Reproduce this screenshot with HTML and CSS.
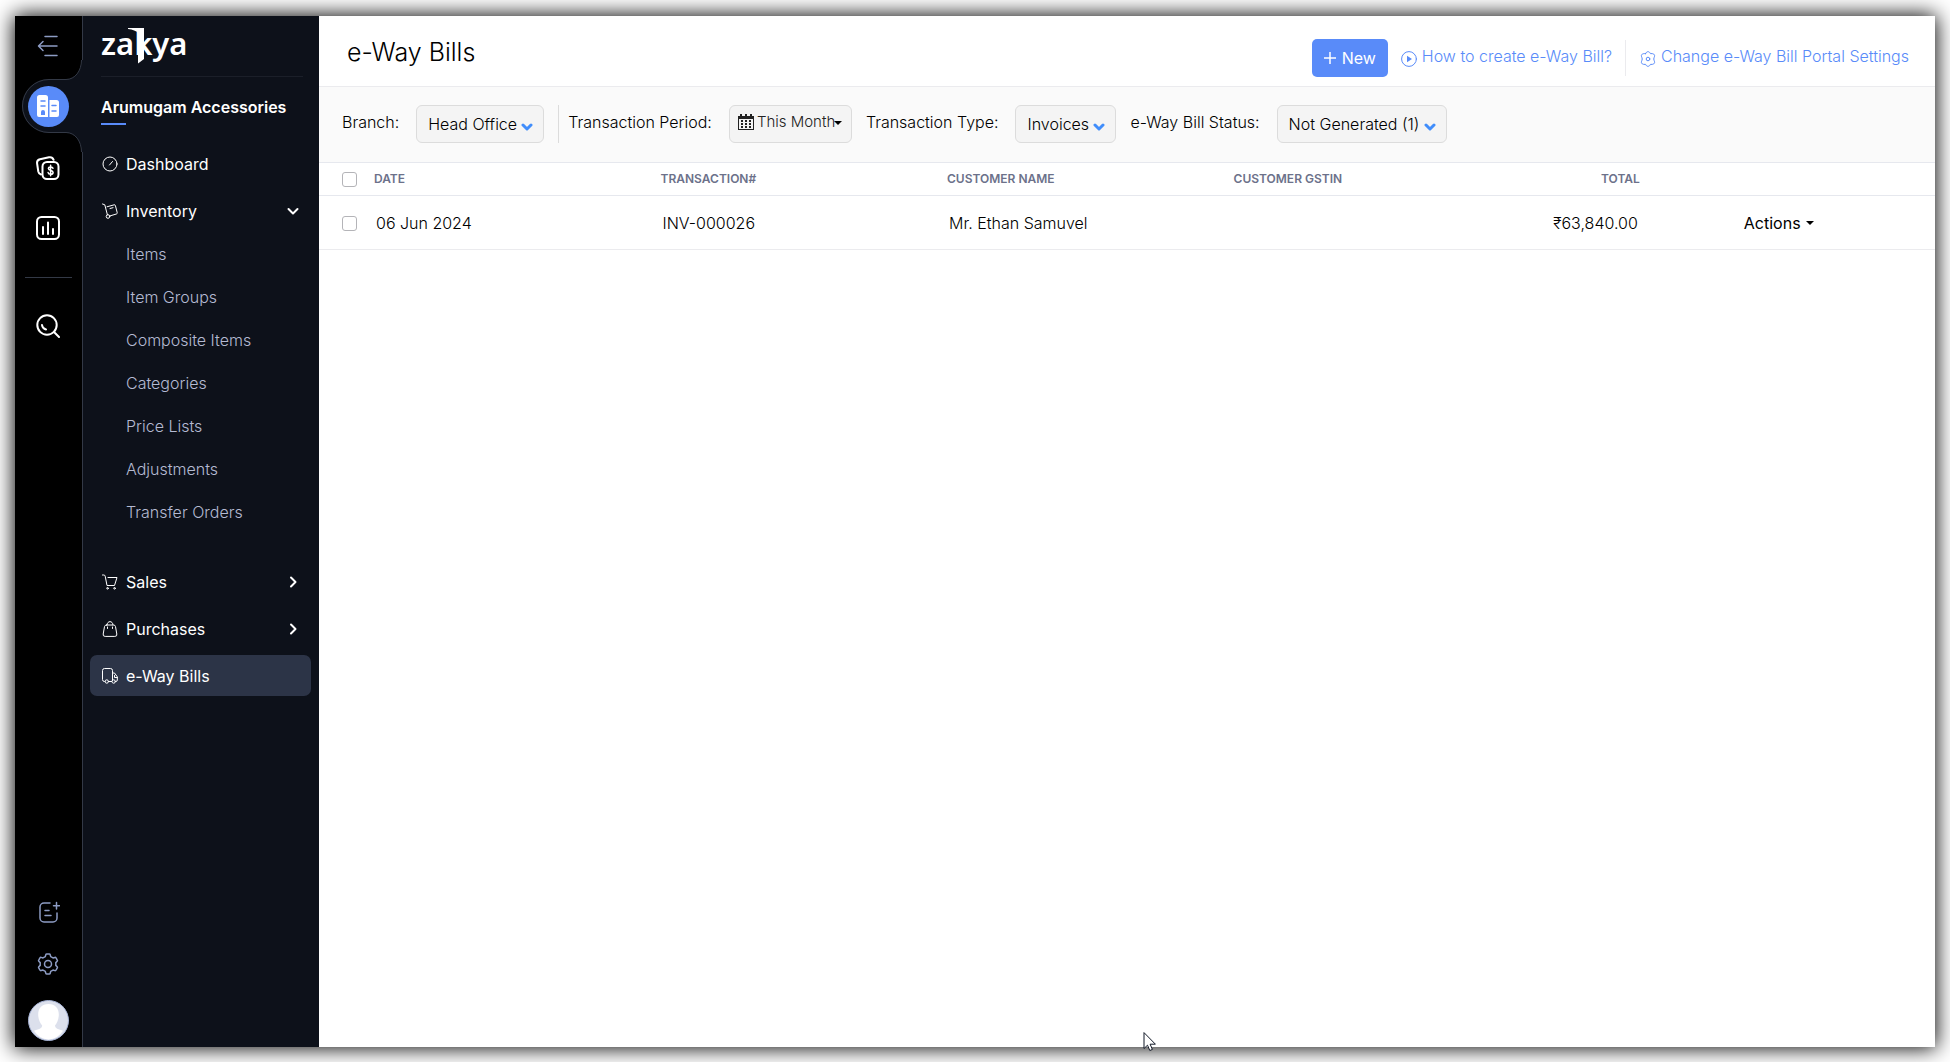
FILE: index.html
```html
<!DOCTYPE html>
<html lang="en">
<head>
<meta charset="utf-8">
<meta name="viewport" content="width=device-width, initial-scale=1">
<title>e-Way Bills | Zakya</title>
<link rel="stylesheet" href="styles.css">
</head>
<body>
<div class="window">
  <nav class="rail" aria-label="Modules">
    <button class="rail-btn rail-toggle" type="button" aria-label="Collapse menu">
      <svg width="24" height="24" viewBox="0 0 24 24"><path d="M9 2.500h12M3 12h18M9 21.500h12M7 7.500l-4.500 4.500 4.500 4.500"/></svg>
    </button>
    <a class="rail-active" href="#" aria-label="Organization">
      <svg class="notch" width="62" height="92" viewBox="0 0 62 92"><path class="notch-fill" d="M62 0h-1C61 11 54 19 45 19H28a27 27 0 0 0 0 54h17c9 0 16 8 16 19h1z"/><path class="notch-line" d="M60.500 0C60.500 11 54 19.500 45 19.500H28a26.500 26.500 0 0 0 0 53h17c9 0 15.500 8.500 15.500 19.500"/></svg>
      <span class="disc">
        <svg width="24" height="24" viewBox="0 0 24 24"><path fill="#fff" d="M3.500 1h6A2.500 2.500 0 0 1 12 3.500V23H3a2 2 0 0 1-2-2V3.500A2.500 2.500 0 0 1 3.500 1zM13.500 6h7A2.500 2.500 0 0 1 23 8.500V21a2 2 0 0 1-2 2h-7.500z"/><path stroke="#598bf9" stroke-width="1.500" d="M5 7h4M5 12h4M16 11.500h4M16 17h4"/><path fill="#598bf9" d="M5 21v-3a2 2 0 0 1 4 0v3z"/></svg>
      </span>
    </a>
    <a class="rail-btn" href="#" aria-label="Payments">
      <svg width="24" height="24" viewBox="0 0 24 24"><rect x="6.500" y="6" width="16" height="17" rx="4.500"/><path d="M5 18.500C3.500 18 2.600 17 2.300 15.500L1.100 7.500C.8 5.500 2 3.800 4 3.300l9-2c2-.4 3.900.7 4.600 2.500"/><path d="M17 12.200c-.3-.9-1.200-1.300-2.400-1.300-1.300 0-2.200.6-2.200 1.700 0 2.500 4.700 1.200 4.700 3.800 0 1.100-1 1.800-2.400 1.800s-2.400-.6-2.600-1.600M14.600 9.300v10.400" stroke-width="1.500"/></svg>
    </a>
    <a class="rail-btn rail-chart" href="#" aria-label="Reports">
      <svg width="24" height="24" viewBox="0 0 24 24"><rect x="1" y="1" width="22" height="22" rx="4.500"/><path d="M7 11v7M12 6.500V18M17 13v5"/></svg>
    </a>
    <hr class="rail-rule">
    <button class="rail-btn" type="button" aria-label="Search">
      <svg width="24" height="24" viewBox="0 0 24 24"><circle cx="11" cy="11" r="9.700"/><path d="M18 18l5 5M6 11c.3 2.400 1.600 4 4 4.500"/></svg>
    </button>
    <div class="rail-bottom">
      <button class="rail-btn muted" type="button" aria-label="What's new">
        <svg width="24" height="24" viewBox="0 0 24 24"><path d="M14 3H8a4 4 0 0 0-4 4v11a4 4 0 0 0 4 4h9a4 4 0 0 0 4-4v-5M20.500 2.500V9M17.500 5.700h6M9 10.500h4M9 15.500h6"/></svg>
      </button>
      <button class="rail-btn muted" type="button" aria-label="Settings">
        <svg width="24" height="24" viewBox="0 0 24 24"><circle cx="12" cy="12" r="3.500"/><path d="M9.300 4.600 9.800 2.700Q10 2 10.700 2h2.600q.7 0 .9.700l.5 1.900 2.300 1.300 1.900-.5q.7-.2 1.100.4l1.300 2.300q.4.600-.1 1.100L19.800 10.600v2.800l1.400 1.400q.5.500.1 1.100L20 18.200q-.4.600-1.100.4l-1.900-.5-2.300 1.300-.5 1.900q-.2.700-.9.700h-2.600q-.7 0-.9-.7l-.5-1.900L7 18.100l-1.900.5q-.7.200-1.100-.4l-1.300-2.300q-.4-.6.1-1.100l1.400-1.400v-2.800L2.800 9.200q-.5-.5-.1-1.100L4 5.800q.4-.6 1.100-.4l1.900.5z"/></svg>
      </button>
      <button class="avatar" type="button" aria-label="Profile">
        <svg width="41" height="41" viewBox="0 0 41 41"><circle cx="20.500" cy="20.500" r="20" fill="#dce0ec" stroke="#a5b2d4"/><path fill="#fff" stroke="none" d="M20.500 4c7 0 10.500 4.500 10.300 11-.2 5-1.800 8-3.800 10.500.2 2.500 2 3.500 8 5.200A18.500 18.500 0 0 1 20.500 39.500 18.500 18.500 0 0 1 6 30.700c6-1.700 8-2.700 8.200-5.200-2-2.500-3.800-5.500-4-10.500C10 8.500 13.500 4 20.500 4z"/></svg>
      </button>
    </div>
  </nav>

  <aside class="sidebar">
    <div class="brand">
      <span class="logo">zakya<svg class="logo-flag" width="16" height="36" viewBox="0 0 16 36"><path d="M0 0h16v31l-6 4.500V5C8 3 5 1.500 0 1z"/></svg></span>
    </div>
    <h2 class="org">Arumugam Accessories</h2>
    <nav class="menu" aria-label="Main">
      <a class="item" href="#"><svg width="16" height="16" viewBox="0 0 16 16"><circle cx="8" cy="8" r="7"/><path d="M7.500 9l3-3.500"/></svg>Dashboard</a>
      <a class="item" href="#"><svg width="16" height="16" viewBox="0 0 16 16"><path d="M.5 1l2.300.8 2.600 10"/><circle cx="6" cy="13.500" r="1.800"/><path d="M5 3.800l7.200-2a1 1 0 0 1 1.200.8l1.800 7c.2.700-.1 1.200-.8 1.400l-6.800 2M8 5.500l3-.8"/></svg>Inventory<svg class="chev" width="12" height="12" viewBox="0 0 12 12"><path d="M1.500 4L6 8.500 10.500 4"/></svg></a>
      <div class="sub">
        <a href="#">Items</a>
        <a href="#">Item Groups</a>
        <a href="#">Composite Items</a>
        <a href="#">Categories</a>
        <a href="#">Price Lists</a>
        <a href="#">Adjustments</a>
        <a href="#">Transfer Orders</a>
      </div>
      <a class="item" href="#"><svg width="16" height="16" viewBox="0 0 16 16"><path d="M.5 1h1.300c.8 0 1.200.4 1.400 1.200L5 11.500h7.500L15 3.500H6"/><circle cx="5.500" cy="14.300" r=".8"/><circle cx="12.500" cy="14.300" r=".8"/></svg>Sales<svg class="chev" width="12" height="12" viewBox="0 0 12 12"><path d="M4 1.500L8.500 6 4 10.500"/></svg></a>
      <a class="item" href="#"><svg width="16" height="16" viewBox="0 0 16 16"><path d="M4.500 4h7a2 2 0 0 1 2 1.600l1.300 7.400a2 2 0 0 1-2 2.400H3.200a2 2 0 0 1-2-2.400l1.300-7.400a2 2 0 0 1 2-1.600zM5 4c0-4.600 6-4.600 6 0M5.500 6v1.500M10.500 6v1.500"/></svg>Purchases<svg class="chev" width="12" height="12" viewBox="0 0 12 12"><path d="M4 1.500L8.500 6 4 10.500"/></svg></a>
      <a class="item current" href="#" aria-current="page"><svg width="16" height="16" viewBox="0 0 16 16"><path d="M3 13.500H2.500a2 2 0 0 1-2-2v-9a2 2 0 0 1 2-2h6a2 2 0 0 1 2 2v10M6.500 13.500h3.200M10.500 5h2l2.800 3.800v3.200a1.500 1.500 0 0 1-1.500 1.500h-.3M12.500 7.500v2h2.800"/><circle cx="4.800" cy="13.500" r="1.700"/><circle cx="11.700" cy="13.500" r="1.700"/></svg>e-Way Bills</a>
    </nav>
  </aside>

  <main class="main">
    <header class="topbar">
      <h1>e-Way Bills</h1>
      <div class="actions">
        <button class="new" type="button"><svg width="12" height="12" viewBox="0 0 12 12"><path d="M6 0v12M0 6h12"/></svg>New</button>
        <a class="help" href="#"><svg width="16" height="16" viewBox="0 0 16 16"><circle cx="8" cy="8" r="7.400"/><path fill="#598bf9" stroke="none" d="M6 4.800v6.400L11 8z"/></svg><span>How to create e-Way Bill?</span></a>
        <a class="help portal" href="#"><svg width="16" height="16" viewBox="0 0 16 16"><circle cx="8" cy="8" r="1.800"/><path d="M5.600 2.600C6.300 1.200 7 .7 8 .7s1.700.5 2.400 1.900c1.500-.1 2.700 0 3.400.6.900.6 1.100 1.600.4 3.100q-.9 1.700 0 3.400c.7 1.500.5 2.500-.4 3.100-.7.600-1.900.7-3.400.6-.7 1.400-1.400 1.900-2.400 1.900s-1.700-.5-2.400-1.900c-1.500.1-2.700 0-3.400-.6-.9-.6-1.100-1.600-.4-3.100q.9-1.700 0-3.400c-.7-1.500-.5-2.500.4-3.100.7-.6 1.900-.7 3.400-.6z"/></svg><span>Change e-Way Bill Portal Settings</span></a>
      </div>
    </header>

    <form class="filters">
      <div class="filter branch">
        <label for="branch">Branch:</label>
        <span class="pick"><select id="branch"><option>Head Office</option></select><svg class="tick" width="12" height="8" viewBox="0 0 12 8"><path d="M2 2l4 4 4-4"/></svg></span>
      </div>
      <div class="filter">
        <label for="period">Transaction Period:</label>
        <span class="pick period"><svg class="cal" width="16" height="16" viewBox="0 0 16 16"><path d="M2 0h2v2h3V0h2v2h3V0h2v2h2v14H0V2h2zM1 5v10h14V5z" fill-rule="evenodd"/><path d="M3 6h2v2H3zM7 6h2v2H7zM11 6h2v2h-2zM3 9h2v2H3zM7 9h2v2H7zM11 9h2v2h-2zM3 12h2v2H3zM7 12h2v2H7zM11 12h2v2h-2z"/></svg><select id="period"><option>This Month</option></select><svg class="caret" width="8" height="4" viewBox="0 0 8 4"><path d="M0 0h8L4 4z"/></svg></span>
      </div>
      <div class="filter">
        <label for="type">Transaction Type:</label>
        <span class="pick"><select id="type"><option>Invoices</option></select><svg class="tick" width="12" height="8" viewBox="0 0 12 8"><path d="M2 2l4 4 4-4"/></svg></span>
      </div>
      <div class="filter">
        <label for="status">e-Way Bill Status:</label>
        <span class="pick"><select id="status"><option>Not Generated (1)</option></select><svg class="tick" width="12" height="8" viewBox="0 0 12 8"><path d="M2 2l4 4 4-4"/></svg></span>
      </div>
    </form>

    <table class="bills">
      <colgroup><col class="c-check"><col class="c-text"><col class="c-text"><col class="c-text"><col class="c-text"><col class="c-total"><col></colgroup>
      <thead>
        <tr><th class="check"><input type="checkbox" aria-label="Select all"></th><th>DATE</th><th>TRANSACTION#</th><th>CUSTOMER NAME</th><th>CUSTOMER GSTIN</th><th class="num">TOTAL</th><th></th></tr>
      </thead>
      <tbody>
        <tr><td class="check"><input type="checkbox" aria-label="Select INV-000026"></td><td>06 Jun 2024</td><td>INV-000026</td><td>Mr. Ethan Samuvel</td><td></td><td class="num">₹63,840.00</td><td class="menu-cell"><button class="row-menu" type="button">Actions<svg class="caret" width="8" height="4" viewBox="0 0 8 4"><path d="M0 0h8L4 4z"/></svg></button></td></tr>
      </tbody>
    </table>
  </main>
</div>
<svg class="pointer" width="13" height="20" viewBox="0 0 13 20"><path fill="#fff" stroke="#111827" d="M1 1v15.500l3.500-3.300 2.300 5.300 2.600-1.100-2.300-5.200H12z"/></svg>
</body>
</html>
```
FILE: styles.css
```css
* { box-sizing: border-box; }

body {
  margin: 0;
  padding: 16px 15px 15px;
  min-height: 100vh;
  display: flex;
  position: relative;
  overflow: hidden;
  background: #fff;
  color: #000;
  font: 300 16px/20px Inter, "Liberation Sans", sans-serif;
}

a { color: inherit; text-decoration: none; }
button, select { font: inherit; color: inherit; border: 0; background: none; padding: 0; margin: 0; }
svg { fill: none; stroke: currentColor; flex: none; stroke-linecap: round; stroke-linejoin: round; }

.window {
  flex: 1;
  min-width: 0;
  display: flex;
  box-shadow: 0 0 20px 1px #000;
  background: #fff;
}

/* icon rail */
.rail {
  width: 68px;
  flex: none;
  display: flex;
  flex-direction: column;
  align-items: center;
  padding: 16px 1px 6px 0;
  background: #000;
  color: #fff;
  border-right: 1px solid #333946;
}
.rail-btn {
  width: 32px;
  height: 32px;
  flex: none;
  display: grid;
  place-items: center;
}
.rail-btn svg { stroke-width: 2; }
.rail-toggle { height: 28px; color: #8d9cc4; }
.rail-toggle svg { stroke-width: 1.500; }
.rail-active {
  position: relative;
  align-self: stretch;
  height: 92px;
  flex: none;
  display: grid;
  place-items: center;
}
.notch { position: absolute; top: 0; right: -2px; }
.notch-fill { fill: #0d111a; stroke: none; }
.notch-line { stroke: #333946; stroke-linecap: butt; }
.disc {
  position: relative;
  width: 41px;
  height: 41px;
  border-radius: 50%;
  background: #598bf9;
  display: grid;
  place-items: center;
}
.disc svg { stroke: none; }
.rail-chart { margin-top: 28px; }
.rail-rule { width: 47px; margin: 33px 0 32px; border: 0; border-top: 1px solid #333946; }
.rail-bottom {
  margin-top: auto;
  display: flex;
  flex-direction: column;
  align-items: center;
  gap: 20px;
}
.muted { color: #8d9cc4; }
.rail .muted svg { stroke-width: 1.500; }
.avatar { width: 41px; height: 41px; }
.avatar svg { display: block; }

/* sidebar */
.sidebar {
  width: 236px;
  flex: none;
  padding: 0 8px 0 7px;
  background: #0d111a;
  color: #fff;
}
.brand {
  height: 61px;
  margin: 0 8px 0 11px;
  padding-top: 7px;
  border-bottom: 1px solid #1b1f29;
}
.logo {
  position: relative;
  display: inline-block;
  font: 600 31px/40px "Noto Sans", sans-serif;
}
.logo-flag { position: absolute; left: 27px; top: 5px; fill: #fff; stroke: none; }
.org {
  margin: 20px 11px 18px;
  font-size: 16px;
  line-height: 20px;
  font-weight: 600;
}
.org::after {
  content: "";
  display: block;
  width: 25px;
  height: 2px;
  margin-top: 6px;
  background: #598bf9;
}
.menu { display: flex; flex-direction: column; gap: 6px; font-weight: 400; }
.item {
  height: 41px;
  display: flex;
  align-items: center;
  gap: 8px;
  padding: 0 12px;
  border-radius: 7px;
}
.item .chev { margin-left: auto; stroke-width: 2; }
.current { background: #2c3447; }
.sub { margin: -4px 0 21px 36px; color: #b4bad2; font-weight: 300; }
.sub a { display: block; line-height: 43px; }

/* content */
.main { flex: 1; min-width: 0; }
.topbar {
  height: 71px;
  display: flex;
  align-items: center;
  justify-content: space-between;
  padding: 0 26px 0 28px;
  border-bottom: 1px solid #ebebee;
}
.topbar h1 { margin: 2px 0 0; font-size: 25px; line-height: 32px; font-weight: 300; }
.actions { display: flex; align-items: center; color: #598bf9; margin-top: 13px; }
.new {
  height: 38px;
  padding: 0 12px;
  display: flex;
  align-items: center;
  gap: 6px;
  border-radius: 5px;
  background: #598bf9;
  color: #fff;
  font-weight: 400;
}
.new svg { stroke-width: 1.500; }
.help { display: flex; align-items: center; gap: 5px; height: 36px; margin-left: 13px; }
.help svg { margin-top: 2px; }
.help span { padding-bottom: 3px; }
.portal { border-left: 1px solid #ebebee; padding-left: 14px; }

.filters {
  height: 76px;
  display: flex;
  align-items: center;
  gap: 14px;
  padding: 0 23px 2px;
  background: #fafafa;
  border-bottom: 1px solid #e6e8ee;
}
.filter { display: flex; align-items: center; gap: 17px; height: 38px; }
.filter label { padding-bottom: 3px; }
.branch { padding-right: 14px; margin-right: -5px; border-right: 1px solid #dcdcdc; }
.pick {
  position: relative;
  display: flex;
  height: 38px;
  border: 1px solid #dcdcdc;
  border-radius: 6px;
  background: #f4f4f4;
}
.pick select {
  appearance: none;
  padding: 0 26px 0 11px;
  border-radius: 6px;
}
.tick { position: absolute; right: 10px; top: 17px; stroke: #408dfb; stroke-width: 3; pointer-events: none; }
.pick.period select { padding: 0 15px 3px 27px; color: #222; font-size: 15px; }
.cal { position: absolute; left: 8px; top: 8px; fill: #222; stroke: none; pointer-events: none; }
.caret { fill: currentColor; stroke: none; }
.period .caret { position: absolute; right: 9px; top: 15px; }

.bills { width: 100%; border-collapse: collapse; table-layout: fixed; }
.c-check { width: 47px; }
.c-text { width: 17.730%; }
.c-total { width: 8.400%; }
.bills th {
  height: 32px;
  padding: 0 8px;
  text-align: left;
  font-size: 12px;
  line-height: 16px;
  font-weight: 600;
  color: #6c718a;
  border-bottom: 1px solid #e6e8ee;
}
.bills td { height: 54px; padding: 2px 10px 0; border-bottom: 1px solid #ebebee; }
.bills .num { text-align: right; }
.bills .check { padding: 2px 0 0 23px; }
.bills .menu-cell { padding-left: 96px; }
.check input {
  appearance: none;
  display: block;
  width: 15px;
  height: 15px;
  margin: 0;
  border: 1px solid #b4b4b8;
  border-radius: 3px;
  background: #fff;
}
.row-menu { display: flex; align-items: center; gap: 5px; font-weight: 400; }

/* mouse pointer lying over the page */
.pointer { position: absolute; left: 58.600%; bottom: 10px; }
```
